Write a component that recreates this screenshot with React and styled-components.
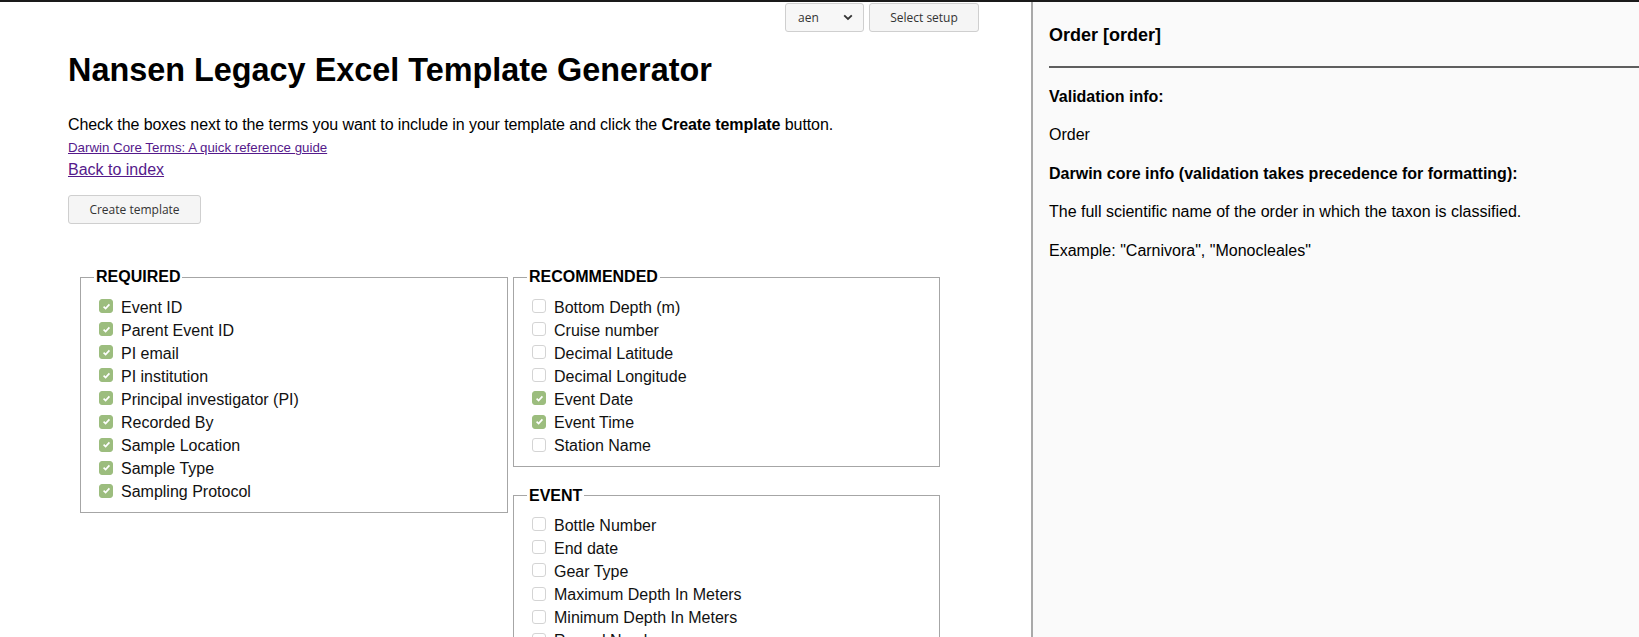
import React from "react";
import styled, { createGlobalStyle } from "styled-components";

const GlobalStyle = createGlobalStyle`
  html, body { margin: 0; padding: 0; }
  body {
    font-family: "Liberation Sans", Arial, sans-serif;
    color: #000;
    background: #fff;
  }
`;

const Shell = styled.div`
  display: flex;
  height: 100vh;
  box-sizing: border-box;
  border-top: 2px solid #1a1a1a;
  overflow: hidden;
`;

const Main = styled.main`
  flex: 0 0 1031px;
  box-sizing: border-box;
  padding-left: 68px;
  overflow: hidden;
`;

const TopBar = styled.div`
  display: flex;
  justify-content: flex-end;
  gap: 5px;
  padding: 1px 52px 0 0;
`;

const SelectBox = styled.div`
  box-sizing: border-box;
  width: 79px;
  height: 29px;
  display: flex;
  align-items: center;
  justify-content: space-between;
  padding: 0 10px 0 12px;
  border: 1px solid #cfcfcf;
  border-radius: 3px;
  background: #f7f7f7;
  font-family: "Open Sans", "Noto Sans", sans-serif;
  font-size: 12px;
  color: #333;
`;

const Button = styled.button`
  box-sizing: border-box;
  height: 29px;
  width: ${(p) => p.$w}px;
  margin: ${(p) => p.$m || 0};
  padding: 0;
  border: 1px solid #cfcfcf;
  border-radius: 3px;
  background: #f5f5f5;
  font-family: "Open Sans", "Noto Sans", sans-serif;
  font-size: 12px;
  color: #333;
  cursor: pointer;
`;

const Title = styled.h1`
  margin: 20px 0 0;
  font-size: 32.4px;
  line-height: 37px;
  font-weight: bold;
`;

const Intro = styled.p`
  margin: 26px 0 0;
  font-size: 16px;
  line-height: 20px;
  letter-spacing: -0.08px;
`;

const LinkLine = styled.div`
  font-size: ${(p) => p.$size}px;
  line-height: ${(p) => p.$lh}px;
  margin-top: ${(p) => p.$mt || 0}px;
`;

const Link = styled.a`
  color: #551a8b;
  text-decoration: underline;
`;

const Columns = styled.div`
  display: flex;
  align-items: flex-start;
  gap: 5px;
  margin-top: 44px;
  padding-left: 12px;
`;

const Column = styled.div`
  display: flex;
  flex-direction: column;
  gap: 20px;
`;

const Group = styled.fieldset`
  box-sizing: border-box;
  width: ${(p) => p.$w}px;
  margin: 0;
  min-width: 0;
  border: 1px solid #a6a6a6;
  padding: 9.6px 13px 8px 13px;
`;

const Legend = styled.legend`
  padding: 0 2px;
  font-size: 16px;
  font-weight: bold;
`;

const Row = styled.label`
  display: flex;
  align-items: center;
  height: 23.1px;
  font-size: 16px;
  color: #111;
`;

const Box = styled.span`
  box-sizing: border-box;
  flex: 0 0 14px;
  width: 14px;
  height: 14px;
  margin: 0 8px 3px 5px;
  border-radius: 3px;
  border: 1px solid ${(p) => (p.$on ? "#9cbd7e" : "#d4d4d4")};
  background: ${(p) => (p.$on ? "#9cbd7e" : "#fff")};
  display: flex;
  align-items: center;
  justify-content: center;
`;

const Side = styled.aside`
  flex: 1;
  box-sizing: border-box;
  border-left: 2px solid #a9a9a9;
  background: #fafafa;
  padding: 23px 0 0 16px;
`;

const SideTitle = styled.h2`
  margin: 0;
  font-size: 18px;
  line-height: 21px;
  font-weight: bold;
`;

const Rule = styled.hr`
  margin: 20px 0 0;
  border: 0;
  height: 2px;
  background: #5e5e5e;
`;

const Info = styled.div`
  display: flex;
  flex-direction: column;
  gap: 18.4px;
  margin-top: 19px;
`;

const InfoLine = styled.p`
  margin: 0;
  font-size: 16px;
  line-height: 20px;
  font-weight: ${(p) => (p.$bold ? "bold" : "normal")};
`;

const Chevron = () => (
  <svg width="10" height="7" viewBox="0 0 10 7">
    <path d="M1.2 1.3 L5 5 L8.8 1.3" fill="none" stroke="#333" strokeWidth="1.8" />
  </svg>
);

const Check = () => (
  <svg width="11" height="11" viewBox="0 0 11 11">
    <path d="M2.6 5.6 L4.6 7.5 L8.4 3.4" fill="none" stroke="#fff" strokeWidth="1.7" />
  </svg>
);

const groups = [
  {
    col: 0,
    width: 428,
    name: "REQUIRED",
    items: [
      ["Event ID", true],
      ["Parent Event ID", true],
      ["PI email", true],
      ["PI institution", true],
      ["Principal investigator (PI)", true],
      ["Recorded By", true],
      ["Sample Location", true],
      ["Sample Type", true],
      ["Sampling Protocol", true],
    ],
  },
  {
    col: 1,
    width: 427,
    name: "RECOMMENDED",
    items: [
      ["Bottom Depth (m)", false],
      ["Cruise number", false],
      ["Decimal Latitude", false],
      ["Decimal Longitude", false],
      ["Event Date", true],
      ["Event Time", true],
      ["Station Name", false],
    ],
  },
  {
    col: 1,
    width: 427,
    name: "EVENT",
    items: [
      ["Bottle Number", false],
      ["End date", false],
      ["Gear Type", false],
      ["Maximum Depth In Meters", false],
      ["Minimum Depth In Meters", false],
      ["Record Number", false],
      ["Sampling Event Remarks", false],
      ["Start Time", false],
    ],
  },
];

const FieldGroup = ({ name, items, width }) => (
  <Group $w={width}>
    <Legend>{name}</Legend>
    {items.map(([label, on]) => (
      <Row key={label}>
        <Box $on={on}>{on && <Check />}</Box>
        {label}
      </Row>
    ))}
  </Group>
);

export default function App() {
  return (
    <>
      <GlobalStyle />
      <Shell>
        <Main>
          <TopBar>
            <SelectBox>
              <span>aen</span>
              <Chevron />
            </SelectBox>
            <Button $w={110}>Select setup</Button>
          </TopBar>
          <Title>Nansen Legacy Excel Template Generator</Title>
          <Intro>
            Check the boxes next to the terms you want to include in your template and click the{" "}
            <b>Create template</b> button.
          </Intro>
          <LinkLine $size={13.3} $lh={20} $mt={3.4}>
            <Link href="#">Darwin Core Terms: A quick reference guide</Link>
          </LinkLine>
          <LinkLine $size={16} $lh={23}>
            <Link href="#">Back to index</Link>
          </LinkLine>
          <Button $w={133} $m="14px 0 0">Create template</Button>
          <Columns>
            {[0, 1].map((c) => (
              <Column key={c}>
                {groups
                  .filter((g) => g.col === c)
                  .map((g) => (
                    <FieldGroup key={g.name} name={g.name} items={g.items} width={g.width} />
                  ))}
              </Column>
            ))}
          </Columns>
        </Main>
        <Side>
          <SideTitle>Order [order]</SideTitle>
          <Rule />
          <Info>
            <InfoLine $bold>Validation info:</InfoLine>
            <InfoLine>Order</InfoLine>
            <InfoLine $bold>Darwin core info (validation takes precedence for formatting):</InfoLine>
            <InfoLine>The full scientific name of the order in which the taxon is classified.</InfoLine>
            <InfoLine>Example: "Carnivora", "Monocleales"</InfoLine>
          </Info>
        </Side>
      </Shell>
    </>
  );
}
